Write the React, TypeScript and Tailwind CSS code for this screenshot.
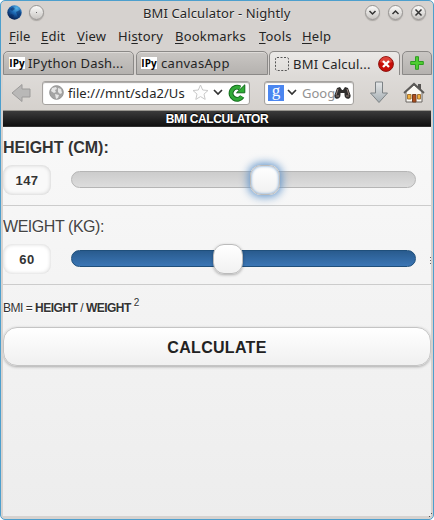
import type { ReactNode } from "react";

const UI = "font-['Noto_Sans','DejaVu_Sans',sans-serif]";

function WindowButton({ children }: { children: ReactNode }) {
  return (
    <span className="flex size-[15px] items-center justify-center rounded-full border border-[#969492] bg-linear-to-b from-[#fbfbfa] to-[#c9c6c3] shadow-[0_1px_1px_#aaa6a2]">
      <svg width="9" height="9" viewBox="0 0 9 9" fill="none" stroke="#333" strokeWidth="1.5">
        {children}
      </svg>
    </span>
  );
}

function MenuItem({ pre = "", hot, rest, className }: { pre?: string; hot: string; rest: string; className: string }) {
  return (
    <span className={`whitespace-nowrap ${className}`}>
      {pre}
      <span className="underline decoration-1 underline-offset-2">{hot}</span>
      {rest}
    </span>
  );
}

function IPyIcon() {
  return (
    <span className="flex h-[12px] w-4 shrink-0 items-center justify-center bg-white font-['Open_Sans',sans-serif] text-[10px] leading-none font-bold tracking-[0px] text-black">
      IPy
    </span>
  );
}

function Chevron() {
  return (
    <svg width="10" height="7" viewBox="0 0 10 7" fill="none" stroke="#333" strokeWidth="1.7">
      <path d="M1 1l4 4 4-4" />
    </svg>
  );
}

function TitleBar() {
  return (
    <div className="flex h-[23px] items-center pl-[6px]">
      <svg width="15" height="15" viewBox="0 0 15 15">
        <defs>
          <radialGradient id="globe" cx="0.65" cy="0.2" r="0.85">
            <stop offset="0" stopColor="#56b5e7" />
            <stop offset="0.45" stopColor="#1c67b3" />
            <stop offset="1" stopColor="#041a4a" />
          </radialGradient>
        </defs>
        <circle cx="7.5" cy="7.5" r="7.2" fill="url(#globe)" />
        <path d="M3 4l3-2 2 2-3 2zM9 7l4-2 1 4-3 3zM4 9l3 1-1 3-3-2z" fill="#08265d" opacity=".5" />
      </svg>
      <span className="ml-[7px] flex size-[15px] items-center justify-center rounded-full border border-[#969492] bg-linear-to-b from-[#fbfbfa] to-[#c9c6c3] shadow-[0_1px_1px_#aaa6a2]">
        <span className="size-px bg-[#666]" />
      </span>
      <span className="ml-[99px] w-[222px] text-[13px] leading-[20px] tracking-[0.120px] whitespace-nowrap [text-shadow:0_1px_0_#f4f3f2]">
        BMI Calculator - Nightly
      </span>
      <div className="flex gap-2">
        <WindowButton><path d="M1.5 3l3 3 3-3" /></WindowButton>
        <WindowButton><path d="M1.5 6l3-3 3 3" /></WindowButton>
        <WindowButton><path d="M1.5 1.5l6 6M7.5 1.5l-6 6" /></WindowButton>
      </div>
    </div>
  );
}

function MenuBar() {
  return (
    <div className="flex h-[27px] pt-[2px] pl-2 text-[13px] leading-[20px] tracking-[0.200px]">
      <MenuItem hot="F" rest="ile" className="w-8" />
      <MenuItem hot="E" rest="dit" className="w-9" />
      <MenuItem hot="V" rest="iew" className="w-[41px]" />
      <MenuItem pre="Hi" hot="s" rest="tory" className="w-[57px]" />
      <MenuItem hot="B" rest="ookmarks" className="w-[84px]" />
      <MenuItem hot="T" rest="ools" className="w-[43px]" />
      <MenuItem hot="H" rest="elp" className="" />
    </div>
  );
}

function TabStrip() {
  return (
    <div className="flex h-6 items-end gap-[2px] pl-px text-[13px] leading-[20px] tracking-[0.200px]">
      <div className="flex h-6 w-[131px] items-center gap-[3px] rounded-t-[5px] border border-[#8b8987] bg-linear-to-b from-[#c9c6c3] to-[#b5b2af] pl-[5px] shadow-[inset_0_1px_0_#dedbd8]">
        <IPyIcon />
        <span className="whitespace-nowrap">IPython Dash...</span>
      </div>
      <div className="flex h-6 w-[132px] items-center gap-[4px] rounded-t-[5px] border border-[#8b8987] bg-linear-to-b from-[#c9c6c3] to-[#b5b2af] pl-[4px] shadow-[inset_0_1px_0_#dedbd8]">
        <IPyIcon />
        <span className="tracking-[0.300px]">canvasApp</span>
      </div>
      <div className="-ml-px flex h-6 w-[131px] items-center rounded-t-[5px] border border-b-0 border-[#8b8987] bg-linear-to-b from-[#ebe9e7] to-[#dedbd8] pl-[5px]">
        <svg width="14" height="14" viewBox="0 0 14 14">
          <rect x=".5" y=".5" width="13" height="13" rx="1.5" fill="none" stroke="#555" strokeDasharray="2 1.5" />
        </svg>
        <span className="ml-1 w-[85px] tracking-[0.200px] whitespace-nowrap">BMI Calcul...</span>
        <svg width="16" height="16" viewBox="0 0 16 16">
          <circle cx="8" cy="8" r="7.4" fill="#c80d08" stroke="#8c1510" />
          <path d="M2 6a6 5 0 0112 0q-6 3-12 0" fill="#ed6257" opacity=".6" />
          <path d="M5 5l6 6M11 5l-6 6" stroke="#fff" strokeWidth="2.3" />
        </svg>
      </div>
      <div className="flex h-6 w-[30px] items-center justify-center rounded-t-[5px] border border-[#8b8987] bg-linear-to-b from-[#c9c6c3] to-[#b5b2af]">
        <svg width="14" height="14" viewBox="0 0 14 14">
          <path d="M5.500.7h3v4.800h4.800v3H8.500v4.800h-3V8.500H.7v-3h4.800z" fill="#4fce31" stroke="#2d9d22" />
        </svg>
      </div>
    </div>
  );
}

function NavBar() {
  return (
    <div className="flex h-[36px] items-center border-b border-[#97958e] bg-linear-to-b from-[#dedbd8] to-[#d5d1cd] pl-2 text-[13px]">
      <svg width="20" height="20" viewBox="0 0 20 20" className="shrink-0">
        <path d="M1 10L11 1.500V6h8v8h-8v4.500z" fill="#b9b8b7" stroke="#9c9b9a" />
      </svg>
      <div className="ml-[11px] flex h-6 w-[208px] shrink-0 items-center rounded-[3px] border border-[#a5a29f] bg-white pl-[6px] shadow-[inset_0_1px_1px_#a9a7a5]">
        <svg width="15" height="15" viewBox="0 0 15 15" className="shrink-0">
          <circle cx="7.500" cy="7.500" r="6.800" fill="#a4a4a4" stroke="#929292" />
          <path d="M3 3l4-1 1 2-2 1 1 2-2 1-3-2zM9 3l3 1 1 4-2 1-2-2zM6 9l4 1-1 3-2 1z" fill="#e6e6e6" />
        </svg>
        <span className="ml-[4px] w-[124px] shrink-0 leading-[20px] tracking-[0.050px] whitespace-nowrap">file:///mnt/sda2/Us</span>
        <svg width="17" height="17" viewBox="0 0 17 17" className="shrink-0">
          <path d="M8.500 1l2.200 5 5.300.5-4 3.600 1.200 5.300-4.700-2.800-4.700 2.800L5 10.100 1 6.500 6.300 6z" fill="#fdfdfd" stroke="#c8c8c8" />
        </svg>
        <span className="mr-[5px] ml-1 shrink-0"><Chevron /></span>
        <svg width="18" height="18" viewBox="0 0 18 18" className="shrink-0">
          <path d="M14.200 12.500A6 6 0 1112 4" fill="none" stroke="#12681b" strokeWidth="5" />
          <path d="M8.500 8.800H16.800V.8z" fill="#2fae35" stroke="#12681b" />
          <path d="M13.900 12.800A6 6 0 1112 4" fill="none" stroke="#31a937" strokeWidth="3.200" />
        </svg>
      </div>
      <div className="ml-[14px] flex h-6 w-[90px] shrink-0 items-center rounded-[3px] border border-[#a5a29f] bg-white pl-[3px] shadow-[inset_0_1px_1px_#a9a7a5]">
        <span className="flex h-4 w-4 shrink-0 items-center justify-center bg-[#4b86f0] pb-1 font-['Liberation_Serif',serif] text-[17px] leading-4 text-white">g</span>
        <span className="ml-[3px] shrink-0"><Chevron /></span>
        <span className="ml-[5px] w-[32px] shrink-0 leading-[20px] text-[#929292]">Goog</span>
        <svg width="17" height="14" viewBox="0 0 17 14" className="relative shrink-0">
          <path d="M3 2l3-1 2 3h1l2-3 3 1 2.500 7c1 5-6 5-6 0V7h-4v2c0 5-7 5-6 0z" fill="#302e2d" />
          <path d="M2 10h3M12 10h3M4 3l-2 6M13 3l2 6" stroke="#96827a" />
        </svg>
      </div>
      <svg width="20" height="23" viewBox="0 0 20 23" className="ml-[15px] shrink-0">
        <defs>
          <linearGradient id="arrow" x1="0" y1="0" x2="0" y2="1">
            <stop stopColor="#e5e7e8" /><stop offset="1" stopColor="#a4adb2" />
          </linearGradient>
        </defs>
        <path d="M6.500 1h7v11h5L10 21.500 1.500 12h5z" fill="url(#arrow)" stroke="#7c8285" />
      </svg>
      <svg width="22" height="21" viewBox="0 0 22 21" className="ml-[14px] shrink-0">
        <path d="M15 2h3v6h-3z" fill="#565452" />
        <path d="M3 10l8-7 8 7v10H3z" fill="#faf8f3" stroke="#686561" />
        <path d="M1 11L11 1.800 21 11" fill="none" stroke="#5b5957" strokeWidth="1.800" />
        <path d="M4.500 12.500h3.500v4.500h-3.500zM14.500 12.500h3v4.500h-3z" fill="#f1b23f" stroke="#a77432" />
        <path d="M9.500 12.500h3.500V20h-3.500z" fill="#b14e19" stroke="#713d22" />
      </svg>
    </div>
  );
}

function SliderField({ label, value, bold, focused }: { label: string; value: number; bold?: boolean; focused?: boolean }) {
  return (
    <section className="h-[79px] border-b border-[#ccc]">
      <div className={`pt-[11px] text-[16px] leading-5 ${bold ? "font-bold" : "font-normal tracking-[-0.450px] text-[#444]"}`}>{label}</div>
      <div className="mt-[7px] flex items-start">
        <span className={`flex h-[30px] w-12 items-center justify-center rounded-[9px] pt-px text-[13px] font-bold tracking-[0.400px] shadow-[inset_0_0_4px_rgba(0,0,0,0.200)] ${focused ? "bg-[#f9f9f9]" : "bg-white"}`}>
          {value}
        </span>
        <div className={`mt-[6px] ml-5 h-[17px] w-[345px] rounded-full border ${focused ? "border-[#b5b5b5] bg-linear-to-b from-[#ccc] to-[#ddd]" : "border-[#1f4f7b] bg-linear-to-b from-[#295b8e] to-[#3b76b5]"}`}>
          <div className={`-mt-[7px] size-[30px] rounded-[11px] border border-[#bbb] bg-linear-to-b from-white to-[#f1f1f1] ${focused ? "ml-[178px] shadow-[inset_0_0_3px_#6798cc,0_0_9px_2px_#6798cc]" : "ml-[141px] shadow-[0_1px_3px_rgba(0,0,0,0.300)]"}`} />
        </div>
      </div>
    </section>
  );
}

function Calculator() {
  return (
    <main className="relative h-[405px] overflow-hidden bg-linear-to-b from-[#f9f9f9] to-[#ededed] font-['Liberation_Sans',Arial,sans-serif] text-[#333] [text-shadow:0_1px_0_#fff]">
      <h1 className="h-[16px] border-b border-[#303030] bg-linear-to-b from-[#3b3b3b] to-[#111] text-center text-[12px] leading-[16px] font-bold tracking-[-0.370px] text-white [text-shadow:0_-1px_1px_#000]">
        BMI CALCULATOR
      </h1>
      <SliderField label="HEIGHT (CM):" value={147} bold focused />
      <SliderField label="WEIGHT (KG):" value={60} />
      <p className="h-[42px] pt-[13px] text-[12px] leading-5 tracking-[-0.500px]">
        BMI = <b>HEIGHT</b> / <b>WEIGHT</b> <sup className="relative -top-[6px] text-[10px] leading-none">2</sup>
      </p>
      <button className="h-[39px] w-full rounded-[14px] border border-[#c4c4c4] bg-linear-to-b from-white to-[#f0f0f0] pt-[2px] text-[16px] font-bold tracking-[0.300px] text-[#222] shadow-[0_1px_3px_rgba(0,0,0,0.300)]">
        CALCULATE
      </button>
      <div className="absolute top-[146px] right-0 flex flex-col gap-[2px]">
        <i className="size-px bg-[#666]" /><i className="size-px bg-[#666]" /><i className="size-px bg-[#666]" />
      </div>
    </main>
  );
}

export default function App() {
  return (
    <div className="h-[520px] w-[434px] bg-white">
      <div className={`relative h-[520px] w-[434px] overflow-hidden rounded-[5px] border border-[#4d9fcd] bg-[#d6d2cf] text-[#252525] ${UI}`}>
        <TitleBar />
        <MenuBar />
        <div className="px-px">
          <TabStrip />
        </div>
        <div className="pr-[2px] pl-[2px]">
          <NavBar />
          <Calculator />
        </div>
        <i className="absolute right-[3px] bottom-[2px] size-px bg-[#555]" />
        <i className="absolute right-px bottom-[5px] size-px bg-[#555]" />
      </div>
    </div>
  );
}
